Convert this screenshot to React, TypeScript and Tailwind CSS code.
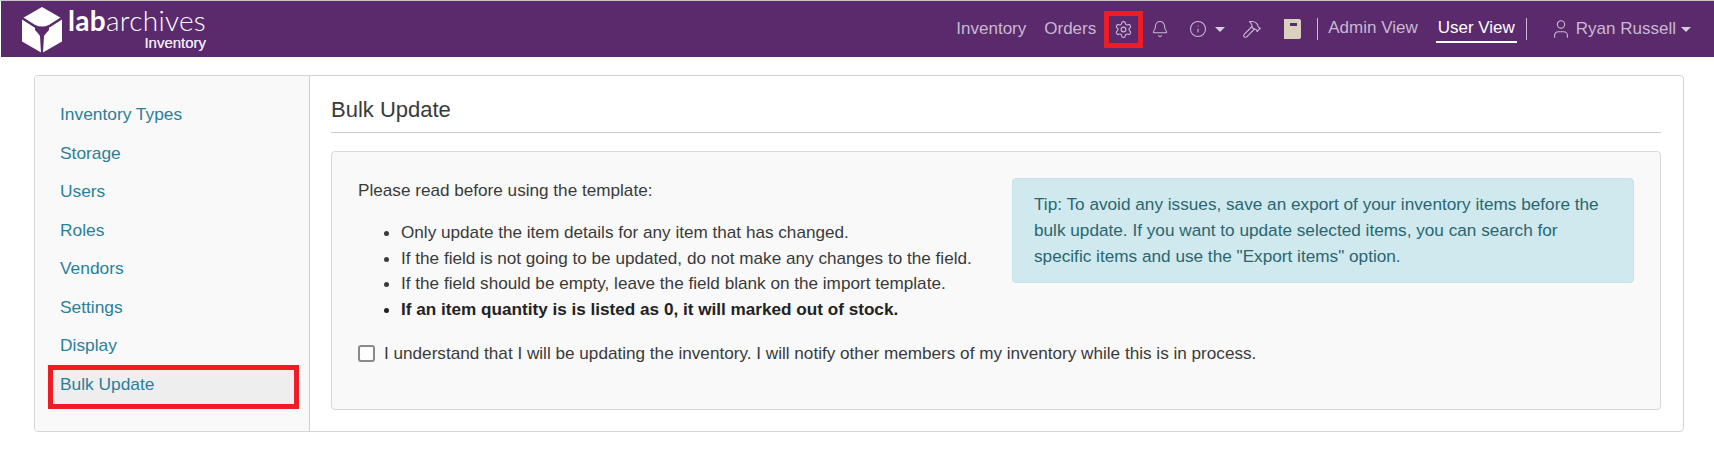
import { Bell, Hammer, Info, Settings, User } from "lucide-react";

const sideItems = ["Inventory Types", "Storage", "Users", "Roles", "Vendors", "Settings", "Display"];

function Logo() {
  return (
    <svg width="40" height="46" viewBox="0 0 40 46" className="shrink-0 mt-px">
      <path d="M20 0 L40 11.5 V34.5 L20 46 L0 34.5 V11.5 Z" fill="#fff" />
      <path d="M0 11 L14 20 M40 11 L26 20" stroke="#5a2a6c" strokeWidth="2.6" fill="none" />
      <path d="M13 18 Q20 21 27 18 L27 23 Q24 26 22 29 L21 46 H19 L18 29 Q16 26 13 23 Z" fill="#5a2a6c" />
    </svg>
  );
}

function Caret() {
  return <span className="inline-block w-0 h-0 border-x-[5px] border-x-transparent border-t-[5px] border-t-[#d8cede]" />;
}

export default function App() {
  return (
    <div className="w-[1714px] h-[472px] bg-white overflow-hidden font-['Liberation_Sans',Arial,sans-serif] text-[17.15px] text-[#3a3a3a]">
      <div className="h-[1px] bg-[#c8c8c8]" />
      <header className="h-[56px] ml-px bg-[#5a2a6c] flex items-center text-[#c9b9d2] text-[17px]">
        <div className="ml-[21px] flex items-start h-full pt-[5px]">
          <Logo />
          <div className="ml-[6px] flex flex-col items-end text-white">
            <div className="text-[28px] leading-[28px] font-['Lato',sans-serif] font-light tracking-[0.3px]">
              <span className="font-bold">lab</span>archives
            </div>
            <div className="text-[15px] leading-[18px] font-['Liberation_Sans',sans-serif] text-[#efe8f5] [text-shadow:0_0_0.4px_#efe8f5]">Inventory</div>
          </div>
        </div>
        <nav className="ml-auto flex items-center mr-[23px]">
          <span>Inventory</span>
          <span className="ml-[18px]">Orders</span>
          <span className="ml-[8px] w-[39px] h-[37px] border-[5px] border-[#ee1c25] flex items-center justify-center">
            <Settings size={19} strokeWidth={1.4} />
          </span>
          <Bell size={18} strokeWidth={1.4} className="ml-[8px]" />
          <Info size={18} strokeWidth={1.4} className="ml-[20px]" />
          <span className="ml-[8px] flex"><Caret /></span>
          <Hammer size={20} strokeWidth={1.3} className="ml-[17px]" />
          <svg width="18" height="20" viewBox="0 0 18 20" className="ml-[21px]">
            <path d="M1 0 H16 A2 2 0 0 1 18 2 V18 A2 2 0 0 1 16 20 H1 Z" fill="#d9d1bd" />
            <rect x="7" y="4" width="7" height="3" fill="#5a2a6c" />
            <path d="M0.5 2 V18" stroke="#5a2a6c" strokeWidth="1" strokeDasharray="1.5 1.5" />
          </svg>
          <span className="ml-[16px] w-px h-[22px] bg-[#c9b9d2]" />
          <span className="ml-[10px] mb-[2px]">Admin View</span>
          <span className="ml-[18px] px-[2px] pb-[3px] mt-[3px] leading-[20px] text-white border-b-2 border-white">User View</span>
          <span className="ml-[9px] w-px h-[22px] bg-[#c9b9d2]" />
          <User size={22} strokeWidth={1.2} className="ml-[23px]" />
          <span className="ml-[4px]">Ryan Russell</span>
          <span className="ml-[5px] flex"><Caret /></span>
        </nav>
      </header>
      <main className="mt-[18px] ml-[34px] w-[1650px] h-[357px] border border-[#d5d5d5] rounded-[4px] flex overflow-hidden">
        <aside className="w-[275px] shrink-0 bg-[#f9f9f9] border-r border-[#d0d0d0] pt-[19px] pl-[13px] pr-[10px] text-[17.35px] text-[#2a7f9a]">
          {sideItems.map((s) => (
            <div key={s} className="h-[38.5px] leading-[38.5px] pl-[12px]">{s}</div>
          ))}
          <div className="h-[44px] border-[5px] border-[#ee1c25] bg-[#eeeeee] leading-[29px] pl-[7px]">Bulk Update</div>
        </aside>
        <section className="flex-1 pl-[21px] pr-[22px]">
          <h1 className="h-[57px] pt-[11px] leading-[46px] text-[22px] text-[#3a3a3a] border-b border-[#ccc]">Bulk Update</h1>
          <div className="mt-[18px] h-[259px] border border-[#d8d8d8] rounded-[4px] bg-[#f9f9f9] pl-[26px] pr-[26px] pt-[26px]">
            <div className="flex justify-between">
              <div className="leading-[25.8px]">
                <p>Please read before using the template:</p>
                <ul className="list-disc pl-[43px] mt-[16px]">
                  <li>Only update the item details for any item that has changed.</li>
                  <li>If the field is not going to be updated, do not make any changes to the field.</li>
                  <li>If the field should be empty, leave the field blank on the import template.</li>
                  <li className="font-bold text-[#222]">If an item quantity is is listed as 0, it will marked out of stock.</li>
                </ul>
              </div>
              <div className="w-[622px] h-[105px] bg-[#d0e9ee] border border-[#c4e4ea] rounded-[4px] px-[21px] pt-[13px] text-[17.2px] leading-[25.8px] text-[#2a6670]">
                Tip: To avoid any issues, save an export of your inventory items before the bulk update. If you want to update selected items, you can search for specific items and use the "Export items" option.
              </div>
            </div>
            <label className="flex items-center mt-[18px] leading-[25.8px]">
              <span className="w-[17px] h-[17px] border-2 border-[#8a8a8a] rounded-[3px] bg-[#fdfdfd] shrink-0" />
              <span className="ml-[9px]">I understand that I will be updating the inventory. I will notify other members of my inventory while this is in process.</span>
            </label>
          </div>
        </section>
      </main>
    </div>
  );
}
